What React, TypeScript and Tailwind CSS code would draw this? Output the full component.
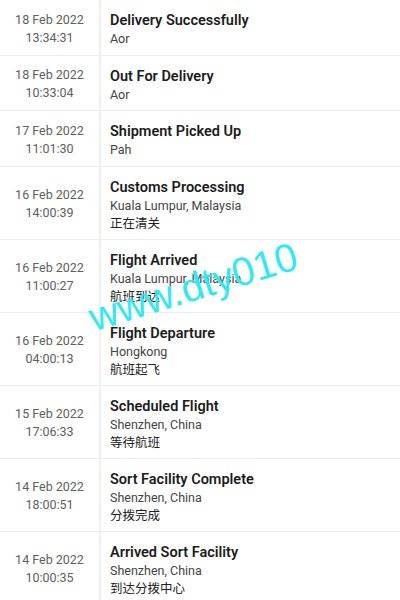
import React from "react";

type Item = { date: string; time: string; title: string; loc: string; cn?: string };

const items: Item[] = [
  { date: "18 Feb 2022", time: "13:34:31", title: "Delivery Successfully", loc: "Aor" },
  { date: "18 Feb 2022", time: "10:33:04", title: "Out For Delivery", loc: "Aor" },
  { date: "17 Feb 2022", time: "11:01:30", title: "Shipment Picked Up", loc: "Pah" },
  { date: "16 Feb 2022", time: "14:00:39", title: "Customs Processing", loc: "Kuala Lumpur, Malaysia", cn: "正在清关" },
  { date: "16 Feb 2022", time: "11:00:27", title: "Flight Arrived", loc: "Kuala Lumpur, Malaysia", cn: "航班到达" },
  { date: "16 Feb 2022", time: "04:00:13", title: "Flight Departure", loc: "Hongkong", cn: "航班起飞" },
  { date: "15 Feb 2022", time: "17:06:33", title: "Scheduled Flight", loc: "Shenzhen, China", cn: "等待航班" },
  { date: "14 Feb 2022", time: "18:00:51", title: "Sort Facility Complete", loc: "Shenzhen, China", cn: "分拨完成" },
  { date: "14 Feb 2022", time: "10:00:35", title: "Arrived Sort Facility", loc: "Shenzhen, China", cn: "到达分拨中心" },
];

export default function App() {
  return (
    <div
      className="relative w-[400px] h-[600px] overflow-hidden bg-white"
      style={{ fontFamily: "Roboto, 'Noto Sans CJK SC', sans-serif" }}
    >
      <div className="flex flex-col">
        {items.map((it, i) => (
          <div key={i} className="flex border-b border-[#ededed]">
            <div className="w-[101px] shrink-0 pt-[2px] border-r-2 border-[#f0f0f0] flex flex-col items-center justify-center text-[12.5px] leading-[18px] text-[#606060]">
              <div>{it.date}</div>
              <div>{it.time}</div>
            </div>
            <div className={`flex-1 pl-[9px] pt-[12px] flex flex-col ${it.cn || i === 1 ? "pb-[6px]" : "pb-[7px]"}`}>
              <div className="text-[14.5px] leading-[18px] font-semibold text-[#1c1c1c]">{it.title}</div>
              <div className="text-[12.5px] leading-[18px] text-[#444]">{it.loc}</div>
              {it.cn && <div className="text-[12.5px] leading-[18px] text-[#222]">{it.cn}</div>}
            </div>
          </div>
        ))}
      </div>
      <div
        className="absolute left-[90px] top-[298px] text-[40px] leading-none text-[#33e8f5] whitespace-nowrap origin-left -rotate-[17deg]"
        style={{ fontFamily: "'Liberation Sans', Arial, sans-serif" }}
      >
        www.dty010
      </div>
    </div>
  );
}
